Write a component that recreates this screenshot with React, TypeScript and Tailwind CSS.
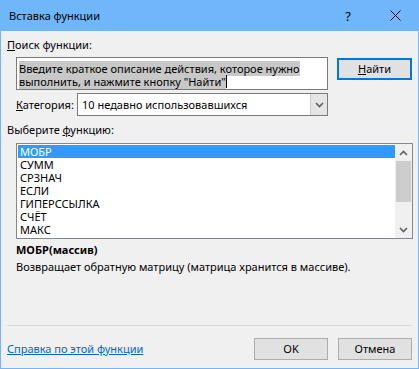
import React from "react";

const font = { fontFamily: '"Noto Sans", "Open Sans", sans-serif' };

function Chevron({ up = false, className = "" }: { up?: boolean; className?: string }) {
  return (
    <svg width="9" height="6" viewBox="0 0 9 6" className={className}>
      <path
        d={up ? "M1 5 L4.5 1.5 L8 5" : "M1 1 L4.5 4.5 L8 1"}
        fill="none"
        stroke="#606060"
        strokeWidth="1.6"
      />
    </svg>
  );
}

export default function App() {
  const items = ["МОБР", "СУММ", "СРЗНАЧ", "ЕСЛИ", "ГИПЕРССЫЛКА", "СЧЁТ", "МАКС"];
  return (
    <div
      className="w-[419px] h-[369px] bg-[#70b6fa] flex flex-col text-[11px] text-black"
      style={font}
    >
      {/* title bar */}
      <div className="h-[31px] flex items-center shrink-0">
        <span className="ml-[9px] text-[11px] leading-[16px] text-black">Вставка функции</span>
        <span className="ml-auto mr-[39px] text-[13px] leading-[16px] text-black">?</span>
        <svg width="11" height="11" viewBox="0 0 11 11" className="mr-[18px]">
          <path d="M0.5 0.5 L10.5 10.5 M10.5 0.5 L0.5 10.5" stroke="#000" strokeWidth="1" />
        </svg>
      </div>

      {/* body */}
      <div className="flex-1 mx-px mb-px bg-[#f0f0f0] flex flex-col">
        <div className="mt-[6px] ml-[6px] leading-[16px]">
          <span className="underline">П</span>оиск функции:
        </div>

        <div className="mt-[4px] ml-[15px] flex items-start">
          <div className="w-[312px] h-[33px] bg-white border border-[#7a7a7a] pl-[2px] pt-[4px] leading-[13px]">
            <span className="bg-[#c8c8c8]">
              Введите краткое описание действия, которое нужно
            </span>
            <br />
            <span className="bg-[#c8c8c8]">выполнить, и нажмите кнопку "Найти"</span>
            <span className="inline-block w-px h-[13px] bg-black align-top" />
          </div>
          <div className="ml-[9px] mt-[1px] w-[75px] h-[22px] border-2 border-[#0078d7] bg-[#e1e1e1] flex items-center justify-center leading-[16px]">
            <span>
              <span className="underline">Н</span>айти
            </span>
          </div>
        </div>

        <div className="mt-[3px] ml-[15px] flex items-center">
          <div className="w-[61px] leading-[16px]">
            <span className="underline">К</span>атегория:
          </div>
          <div className="w-[251px] h-[23px] bg-white border border-[#7a7a7a] flex items-center">
            <span className="ml-[4px] flex-1 leading-[16px]">10 недавно использовавшихся</span>
            <div className="w-[17px] h-[21px] bg-[#e5e5e5] border-l border-[#cccccc] flex items-center justify-center">
              <Chevron />
            </div>
          </div>
        </div>

        <div className="mt-[6px] ml-[6px] leading-[16px]">
          Выберите <span className="underline">ф</span>ункцию:
        </div>

        <div className="mt-[5px] ml-[15px] w-[397px] h-[96px] bg-white border border-[#828790] flex">
          <div className="flex-1 pt-px pl-px">
            {items.map((it, i) => (
              <div
                key={it}
                className={
                  "h-[13px] leading-[13px] pl-[2px] " +
                  (i === 0 ? "bg-[#3399ff] text-white" : "")
                }
              >
                {it}
              </div>
            ))}
          </div>
          <div className="w-[17px] bg-[#f0f0f0] flex flex-col items-center">
            <div className="h-[17px] flex items-center justify-center">
              <Chevron up />
            </div>
            <div className="w-[15px] h-[41px] bg-[#cdcdcd]" />
            <div className="flex-1" />
            <div className="h-[17px] flex items-center justify-center">
              <Chevron />
            </div>
          </div>
        </div>

        <div className="mt-[3px] ml-[15px] font-bold leading-[16px]">МОБР(массив)</div>
        <div className="ml-[15px] leading-[16px] mt-[1px]">
          Возвращает обратную матрицу (матрица хранится в массиве).
        </div>

        <div className="flex-1" />
        <div className="mx-[6px] h-px bg-[#d8d8d8]" />

        <div className="mt-[12px] mb-[8px] ml-[6px] mr-[6px] flex items-center">
          <span className="text-[#0066cc] underline leading-[16px]">Справка по этой функции</span>
          <div className="ml-auto w-[74px] h-[22px] bg-[#e1e1e1] border border-[#adadad] flex items-center justify-center">
            OK
          </div>
          <div className="ml-[10px] w-[74px] h-[22px] bg-[#e1e1e1] border border-[#adadad] flex items-center justify-center">
            Отмена
          </div>
        </div>
      </div>
    </div>
  );
}
